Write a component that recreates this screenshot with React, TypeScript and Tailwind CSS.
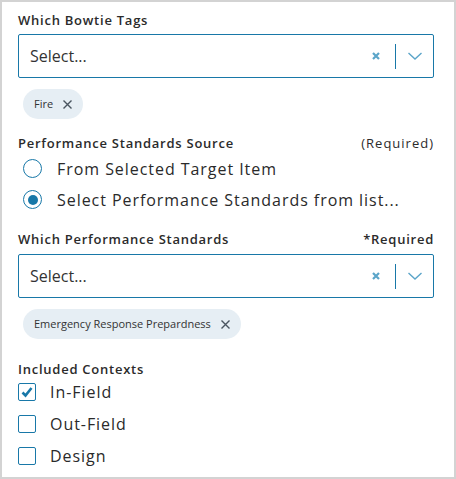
import React from "react";

function SelectBox() {
  return (
    <div className="flex h-[44px] items-center rounded-[2px] border border-[#1878a8] bg-white">
      <div className="flex-1 pl-[11px] text-[16px] text-[#333]">Select...</div>
      <svg width="8" height="8" viewBox="0 0 8 8" className="mr-[15px]">
        <path d="M1 1 L7 7 M7 1 L1 7" stroke="#5ba5c9" strokeWidth="2.2" strokeLinecap="butt" />
      </svg>
      <div className="h-[25px] w-[1px] bg-[#1878a8]" />
      <svg width="14" height="8" viewBox="0 0 14 8" className="ml-[12px] mr-[11px]">
        <path d="M0.5 1 L7 7 L13.5 1" stroke="#5ba5c9" strokeWidth="1.4" fill="none" />
      </svg>
    </div>
  );
}

function Chip({ label }: { label: string }) {
  return (
    <div className="inline-flex h-[30px] items-center gap-[10px] rounded-full bg-[#e6eef4] pl-[11px] pr-[11px] text-[11px] text-[#333]">
      <span>{label}</span>
      <svg width="9" height="9" viewBox="0 0 9 9">
        <path d="M0.5 0.5 L8.5 8.5 M8.5 0.5 L0.5 8.5" stroke="#4a5560" strokeWidth="1.4" />
      </svg>
    </div>
  );
}

function Radio({ checked, label }: { checked?: boolean; label: string }) {
  return (
    <div className="flex h-[31px] items-center">
      <div className="ml-[5px] flex h-[19px] w-[19px] items-center justify-center rounded-full border-[1.5px] border-[#1878a8]">
        {checked && <div className="h-[10px] w-[10px] rounded-full bg-[#1878a8]" />}
      </div>
      <span className="ml-[15px] text-[16px] tracking-[0.95px] text-[#2a2a2a]">{label}</span>
    </div>
  );
}

function Check({ checked, label }: { checked?: boolean; label: string }) {
  return (
    <div className="flex h-[28px] items-center">
      <div className="flex h-[18px] w-[18px] items-center justify-center rounded-[2px] border-[1.5px] border-[#1878a8]">
        {checked && (
          <svg width="12" height="12" viewBox="0 0 12 12">
            <path d="M1.5 6.5 L4.5 9.5 L10.5 2" stroke="#1878a8" strokeWidth="2.6" fill="none" />
          </svg>
        )}
      </div>
      <span className="ml-[14px] text-[16px] tracking-[0.95px] text-[#2a2a2a]">{label}</span>
    </div>
  );
}

export default function App() {
  return (
    <div
      className="box-border h-[479px] w-[456px] border-2 border-[#d3d3d3] bg-white pl-[16px] pr-[20px] pt-[9px]"
      style={{ fontFamily: '"Open Sans", sans-serif' }}
    >
      <div className="h-[18px] text-[13px] font-semibold leading-[18px] tracking-[0.75px] text-[#2b2b2b]">
        Which Bowtie Tags
      </div>
      <div className="mt-[5px]">
        <SelectBox />
      </div>
      <div className="mt-[11px] pl-[5px]">
        <Chip label="Fire" />
      </div>
      <div className="mt-[15px] flex h-[18px] items-center justify-between text-[13px] leading-[18px] tracking-[0.75px] text-[#2b2b2b]">
        <span className="font-semibold">Performance Standards Source</span>
        <span className="tracking-[1px]">(Required)</span>
      </div>
      <div className="mt-[1px]">
        <Radio label="From Selected Target Item" />
        <Radio checked label="Select Performance Standards from list..." />
      </div>
      <div className="mt-[15px] flex h-[18px] items-center justify-between text-[13px] font-semibold leading-[18px] tracking-[0.75px] text-[#2b2b2b]">
        <span>Which Performance Standards</span>
        <span>*Required</span>
      </div>
      <div className="mt-[6px]">
        <SelectBox />
      </div>
      <div className="mt-[11px] pl-[5px]">
        <Chip label="Emergency Response Prepardness" />
      </div>
      <div className="mt-[22px] h-[16px] text-[13px] font-semibold leading-[16px] tracking-[0.75px] text-[#2b2b2b]">
        Included Contexts
      </div>
      <div className="mt-[1px] flex flex-col gap-[4px]">
        <Check checked label="In-Field" />
        <Check label="Out-Field" />
        <Check label="Design" />
      </div>
    </div>
  );
}
